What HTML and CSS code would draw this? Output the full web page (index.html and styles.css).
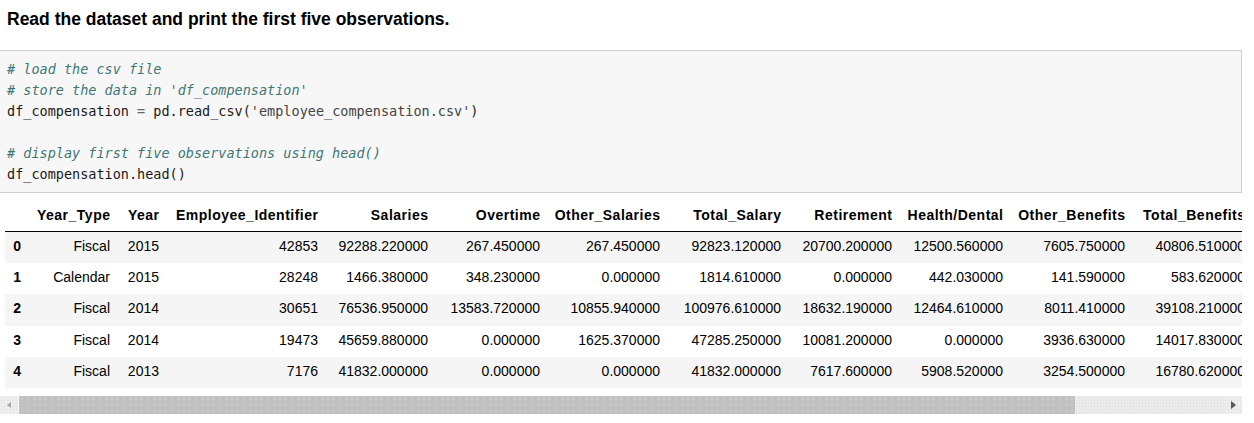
FILE: index.html
```html
<!DOCTYPE html>
<html>
<head>
<meta charset="utf-8">
<link rel="stylesheet" href="styles.css">
</head>
<body>
<div class="cell">
  <p class="md">Read the dataset and print the first five observations.</p>
  <div class="input">
<pre class="code"><span class="c"># load the csv file</span>
<span class="c"># store the data in 'df_compensation'</span>
df_compensation <span class="o">=</span> pd.read_csv(<span class="s">'employee_compensation.csv'</span>)

<span class="c"># display first five observations using head()</span>
df_compensation.head()</pre>
  </div>
  <div class="output">
    <div class="clip">
      <table class="df">
        <colgroup>
          <col class="w-idx"><col class="w90"><col class="w49"><col class="w159"><col class="w110"><col class="w112"><col class="w120"><col class="w121"><col class="w111"><col class="w111"><col class="w122"><col class="w120">
        </colgroup>
        <thead>
          <tr><th class="idx"></th><th>Year_Type</th><th>Year</th><th>Employee_Identifier</th><th>Salaries</th><th>Overtime</th><th>Other_Salaries</th><th>Total_Salary</th><th>Retirement</th><th>Health/Dental</th><th>Other_Benefits</th><th>Total_Benefits</th></tr>
        </thead>
        <tbody>
          <tr><th class="idx">0</th><td>Fiscal</td><td>2015</td><td>42853</td><td>92288.220000</td><td>267.450000</td><td>267.450000</td><td>92823.120000</td><td>20700.200000</td><td>12500.560000</td><td>7605.750000</td><td>40806.510000</td></tr>
          <tr><th class="idx">1</th><td>Calendar</td><td>2015</td><td>28248</td><td>1466.380000</td><td>348.230000</td><td>0.000000</td><td>1814.610000</td><td>0.000000</td><td>442.030000</td><td>141.590000</td><td>583.620000</td></tr>
          <tr><th class="idx">2</th><td>Fiscal</td><td>2014</td><td>30651</td><td>76536.950000</td><td>13583.720000</td><td>10855.940000</td><td>100976.610000</td><td>18632.190000</td><td>12464.610000</td><td>8011.410000</td><td>39108.210000</td></tr>
          <tr><th class="idx">3</th><td>Fiscal</td><td>2014</td><td>19473</td><td>45659.880000</td><td>0.000000</td><td>1625.370000</td><td>47285.250000</td><td>10081.200000</td><td>0.000000</td><td>3936.630000</td><td>14017.830000</td></tr>
          <tr><th class="idx">4</th><td>Fiscal</td><td>2013</td><td>7176</td><td>41832.000000</td><td>0.000000</td><td>0.000000</td><td>41832.000000</td><td>7617.600000</td><td>5908.520000</td><td>3254.500000</td><td>16780.620000</td></tr>
        </tbody>
      </table>
    </div>
    <div class="hscroll">
      <div class="sb-btn"><span class="tri-left"></span></div>
      <div class="sb-thumb"></div>
      <div class="sb-track"></div>
      <div class="sb-btn"><span class="tri-right"></span></div>
    </div>
  </div>
</div>
</body>
</html>
```

FILE: styles.css
```css
html, body {
  margin: 0;
  padding: 0;
  background: #ffffff;
}

.cell {
  width: 1242px;
}

.md {
  margin: 9px 0 0 7px;
  font-family: "Liberation Sans", Arial, sans-serif;
  font-weight: bold;
  font-size: 17.5px;
  line-height: 20px;
  color: #000000;
}

.input {
  margin-top: 21px;
  background: #f7f7f7;
  border: 1px solid #cfcfcf;
  border-left: 0;
}

.code {
  margin: 0;
  padding: 8px 7px 7px 7px;
  font-family: "DejaVu Sans Mono", "Liberation Mono", monospace;
  font-size: 13.5px;
  line-height: 21px;
  color: #1a1a1a;
}

.code .c {
  font-style: italic;
  color: #3f7777;
}

.code .o {
  color: #666666;
}

.code .s {
  color: #444444;
}

.output {
  margin-top: 7px;
}

.clip {
  overflow: hidden;
  width: 1242px;
}

.df {
  margin-left: 5px;
  border-collapse: collapse;
  table-layout: fixed;
  width: 1249px;
  font-family: "Liberation Sans", Arial, sans-serif;
  font-size: 14px;
  color: #000000;
}

.w-idx { width: 24px; }
.w90 { width: 90px; }
.w49 { width: 49px; }
.w159 { width: 159px; }
.w110 { width: 110px; }
.w112 { width: 112px; }
.w120 { width: 120px; }
.w121 { width: 121px; }
.w111 { width: 111px; }
.w122 { width: 122px; }

.df th,
.df td {
  text-align: right;
  white-space: nowrap;
  padding: 7px 9px 7px 0;
  line-height: 17px;
  height: 17px;
  overflow: hidden;
}

.df th {
  font-weight: bold;
}

.df thead th {
  letter-spacing: 0.5px;
  padding-right: 8.5px;
}

.df .idx {
  padding-right: 8px;
}

.df thead tr {
  border-bottom: 1px solid #000000;
}

.df tbody tr:nth-child(odd) {
  background: #f5f5f5;
}

.df tbody td,
.df tbody th {
  padding-top: 6px;
  padding-bottom: 8px;
  height: 17.2px;
}

.hscroll {
  display: flex;
  height: 18px;
  margin-top: 8px;
  width: 1242px;
}

.sb-btn {
  width: 18px;
  flex: none;
  display: flex;
  align-items: center;
  justify-content: center;
  background-color: #eeeeee;
  background-image: radial-gradient(circle, #dcdcdc 0.6px, transparent 0.9px);
  background-size: 3px 3px;
}

.tri-left {
  width: 0;
  height: 0;
  border-top: 3.5px solid transparent;
  border-bottom: 3.5px solid transparent;
  border-right: 4px solid #a8a8a8;
}

.tri-right {
  width: 0;
  height: 0;
  border-top: 4px solid transparent;
  border-bottom: 4px solid transparent;
  border-left: 5px solid #4f5a5a;
}

.sb-thumb {
  margin-left: 1px;
  width: 1056px;
  flex: none;
  background-color: #c1c1c1;
  background-image: radial-gradient(circle, #cfcfcf 0.6px, transparent 0.9px);
  background-size: 6px 6px;
}

.sb-track {
  flex: 1;
  background-color: #ebebeb;
  background-image: radial-gradient(circle, #dcdcdc 0.6px, transparent 0.9px);
  background-size: 3px 3px;
}
```
